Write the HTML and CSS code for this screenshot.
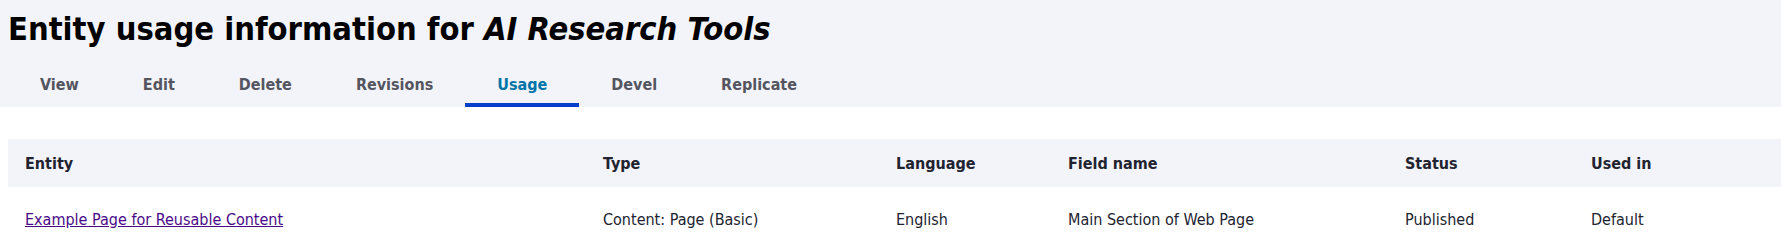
FILE: index.html
```html
<!DOCTYPE html>
<html lang="en">
<head>
    <meta charset="UTF-8">
    <meta name="viewport" content="width=device-width, initial-scale=1.0">
    <title>Entity usage information for AI Research Tools</title>
    <link rel="stylesheet" href="styles.css">
</head>
<body>
    <div class="page-header">
        <h1 class="page-title">Entity usage information for <em>AI Research Tools</em></h1>
        <nav class="tabs">
            <a href="#" class="tab">View</a>
            <a href="#" class="tab">Edit</a>
            <a href="#" class="tab">Delete</a>
            <a href="#" class="tab">Revisions</a>
            <a href="#" class="tab active">Usage</a>
            <a href="#" class="tab">Devel</a>
            <a href="#" class="tab">Replicate</a>
        </nav>
    </div>

    <div class="content">
        <table class="usage-table">
            <colgroup>
                <col class="col-entity">
                <col class="col-type">
                <col class="col-language">
                <col class="col-field">
                <col class="col-status">
                <col>
            </colgroup>
            <thead>
                <tr>
                    <th>Entity</th>
                    <th>Type</th>
                    <th>Language</th>
                    <th>Field name</th>
                    <th>Status</th>
                    <th>Used in</th>
                </tr>
            </thead>
            <tbody>
                <tr>
                    <td><a href="#" class="entity-link">Example Page for Reusable Content</a></td>
                    <td>Content: Page (Basic)</td>
                    <td>English</td>
                    <td>Main Section of Web Page</td>
                    <td>Published</td>
                    <td>Default</td>
                </tr>
            </tbody>
        </table>
    </div>
</body>
</html>
```
FILE: styles.css
```css
* {
    box-sizing: border-box;
    margin: 0;
    padding: 0;
}

body {
    font-family: "DejaVu Sans Condensed", "DejaVu Sans", sans-serif;
    font-size: 16px;
    color: #222330;
    background: #fff;
}

.page-header {
    background: #f3f4f9;
    padding: 0 8px;
}

.page-title {
    font-size: 32.4px;
    line-height: 53px;
    font-weight: bold;
    color: #000;
    padding-top: 3px;
}

.page-title em {
    font-style: italic;
}

.tabs {
    display: flex;
    height: 51px;
    padding-top: 9px;
}

.tab {
    display: flex;
    align-items: center;
    padding: 0 32px;
    font-weight: bold;
    font-size: 16px;
    color: #545560;
    text-decoration: none;
    border-bottom: 4px solid transparent;
}

.tab.active {
    color: #0074a8;
    border-bottom-color: #003ecc;
}

.content {
    padding: 32px 0 0 8px;
}

.usage-table {
    width: 100%;
    border-collapse: collapse;
    table-layout: fixed;
}

.col-entity { width: 578px; }
.col-type { width: 293px; }
.col-language { width: 172px; }
.col-field { width: 337px; }
.col-status { width: 186px; }

.usage-table th {
    background: #f3f4f9;
    text-align: left;
    font-weight: bold;
    height: 48px;
    padding: 0 17px;
    color: #222330;
}

.usage-table td {
    height: 64px;
    padding: 0 17px;
}

.entity-link {
    color: #4a0a88;
}
```
